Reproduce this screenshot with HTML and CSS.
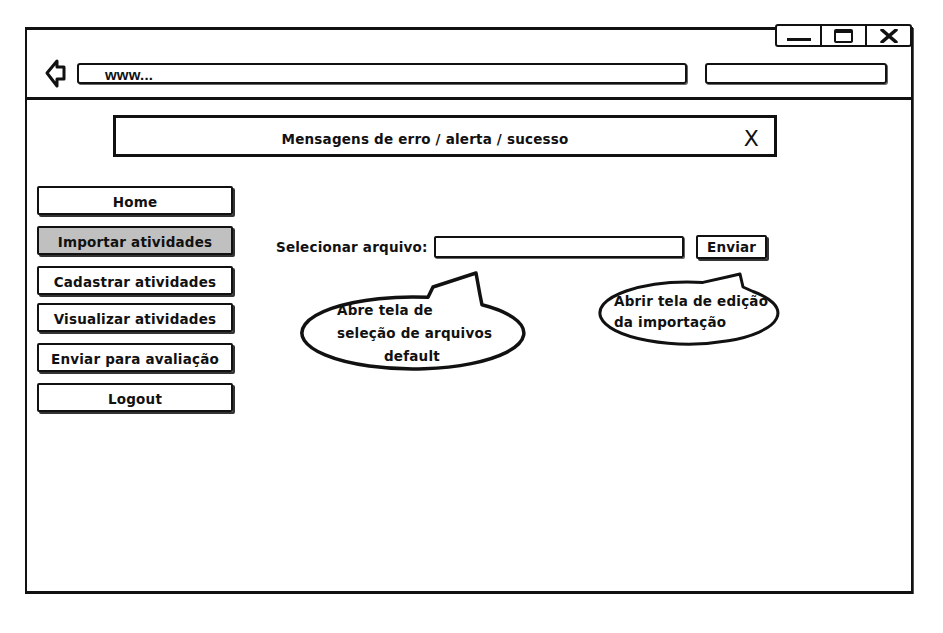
FILE: index.html
```html
<!DOCTYPE html>
<html lang="pt-BR">
<head>
    <meta charset="UTF-8">
    <meta name="viewport" content="width=device-width, initial-scale=1.0">
    <title>Importar atividades</title>
    <link rel="stylesheet" href="styles.css">
</head>
<body>
    <div class="window">
        <div class="controls">
            <span class="ctl"><span class="min"></span></span>
            <span class="ctl"><span class="max"></span></span>
            <span class="ctl">
                <svg width="18" height="14" viewBox="0 0 18 14">
                    <path d="M2 1 L16 13 M16 1 L2 13" stroke="#111" stroke-width="3.5" stroke-linecap="round"/>
                </svg>
            </span>
        </div>

        <div class="toolbar">
            <svg class="back" width="22" height="30" viewBox="0 0 22 30">
                <path d="M12 2 L2 14 L12 27 L12 20 L19 20 L19 8 L12 8 Z" fill="none" stroke="#111" stroke-width="3" stroke-linejoin="round"/>
            </svg>
            <div class="url">www...</div>
            <div class="search"></div>
        </div>

        <div class="main">
            <div class="alert">
                <span class="alert-text">Mensagens de erro / alerta / sucesso</span>
                <span class="alert-close">X</span>
            </div>

            <div class="layout">
                <div class="sidebar">
                    <div class="nav">Home</div>
                    <div class="nav active">Importar atividades</div>
                    <div class="nav tight">Cadastrar atividades</div>
                    <div class="nav">Visualizar atividades</div>
                    <div class="nav">Enviar para avaliação</div>
                    <div class="nav">Logout</div>
                </div>

                <div class="content">
                    <div class="upload">
                        <label>Selecionar arquivo:</label>
                        <div class="file"></div>
                        <div class="send">Enviar</div>
                    </div>
                </div>
            </div>
        </div>

        <div class="note note-file">
            <svg width="232" height="104" viewBox="0 0 232 104">
                <path d="M128 26.3 A111 36 0 1 0 182 33.8 L180 24 L176 2 L133 16 Z" fill="#fff" stroke="#111" stroke-width="3.5" stroke-linejoin="round"/>
            </svg>
            <p class="note-text">
                <span>Abre tela de</span>
                <span>seleção de arquivos</span>
                <span class="indent">default</span>
            </p>
        </div>

        <div class="note note-edit">
            <svg width="186" height="78" viewBox="0 0 186 78">
                <path d="M105 11.4 A89 31 0 1 0 155 20.5 L145 16 L142 3 L129 6 Z" fill="#fff" stroke="#111" stroke-width="3" stroke-linejoin="round"/>
            </svg>
            <p class="note-text">
                <span>Abrir tela de edição</span>
                <span>da importação</span>
            </p>
        </div>
    </div>
</body>
</html>
```

FILE: styles.css
```css
body {
    margin: 0;
    padding: 0;
    background: #fff;
    color: #111;
    font-family: 'DejaVu Sans', sans-serif;
    font-weight: bold;
    font-size: 13.5px;
    letter-spacing: 0.2px;
}
.window {
    position: relative;
    box-sizing: border-box;
    margin: 27px 0 0 25px;
    width: 888px;
    height: 567px;
    border: 2px solid #111;
    border-top-width: 3px;
    border-bottom-width: 3px;
    box-shadow: 1px 1px 0 #555;
}
.controls {
    position: absolute;
    top: -6px;
    right: -1px;
    display: flex;
    border: 2px solid #111;
    border-radius: 3px;
    background: #fff;
}
.ctl {
    width: 43px;
    height: 19px;
    display: flex;
    align-items: center;
    justify-content: center;
    border-left: 2px solid #111;
}
.ctl:first-child {
    border-left: none;
}
.min {
    width: 24px;
    height: 3px;
    margin-top: 8px;
    background: #111;
}
.max {
    width: 15px;
    height: 8px;
    border: 2px solid #111;
    border-top-width: 4px;
    border-radius: 2px;
}
.toolbar {
    height: 70px;
    box-sizing: border-box;
    display: flex;
    align-items: flex-end;
    padding: 0 24px 13px 18px;
    border-bottom: 3px solid #111;
}
.back {
    margin-bottom: -5px;
}
.url {
    margin-left: 10px;
    width: 580px;
    height: 17px;
    border: 2px solid #111;
    border-radius: 3px;
    box-shadow: 1px 1px 0 #666;
    padding-left: 26px;
    font-family: 'Liberation Sans', sans-serif;
    font-size: 15px;
    line-height: 20px;
}
.search {
    margin-left: auto;
    width: 178px;
    height: 17px;
    border: 2px solid #111;
    border-radius: 3px;
    box-shadow: 1px 1px 0 #666;
}
.main {
    padding: 15px 0 0 10px;
}
.alert {
    margin-left: 76px;
    width: 664px;
    height: 42px;
    box-sizing: border-box;
    padding-top: 5px;
    border: 3px solid #111;
    display: flex;
    align-items: center;
    justify-content: center;
    position: relative;
}
.alert-text {
    margin-left: -40px;
}
.alert-close {
    position: absolute;
    right: 15px;
    top: 8px;
    font-weight: normal;
    font-size: 22px;
}
.layout {
    display: flex;
    margin-top: 29px;
}
.sidebar {
    width: 196px;
    display: flex;
    flex-direction: column;
}
.nav {
    height: 29px;
    box-sizing: border-box;
    padding-top: 2px;
    border: 2px solid #111;
    border-radius: 2px;
    box-shadow: 2px 2px 0 #333;
    display: flex;
    align-items: center;
    justify-content: center;
    margin-bottom: 11px;
}
.nav.tight {
    margin-bottom: 8px;
}
.nav.active {
    background: #c0c0c0;
}
.content {
    flex: 1;
    padding: 49px 0 0 43px;
}
.upload {
    display: flex;
    align-items: center;
}
.upload label {
    width: 158px;
}
.file {
    width: 246px;
    height: 18px;
    border: 2px solid #111;
    border-radius: 2px;
    box-shadow: 1px 1px 0 #666;
}
.send {
    margin-left: 12px;
    padding: 2px 9px;
    border: 2px solid #111;
    border-radius: 2px;
    box-shadow: 2px 2px 0 #333;
}
.note {
    position: absolute;
}
.note svg {
    display: block;
}
.note-text {
    position: absolute;
    margin: 0;
    line-height: 23px;
    white-space: nowrap;
}
.note-text span {
    display: block;
}
.note-text .indent {
    padding-left: 47px;
}
.note-file {
    left: 273px;
    top: 241px;
}
.note-file .note-text {
    left: 37px;
    top: 28px;
}
.note-edit {
    left: 571px;
    top: 241px;
}
.note-edit .note-text {
    left: 16px;
    top: 20px;
    line-height: 21px;
}
```
